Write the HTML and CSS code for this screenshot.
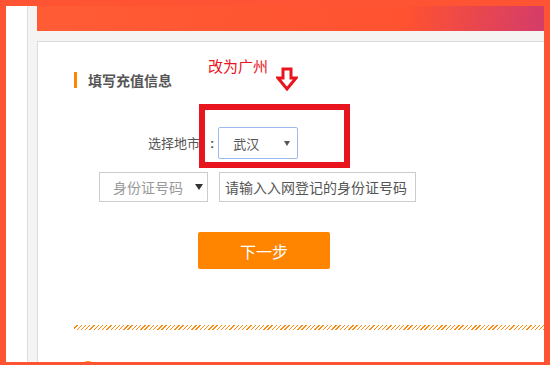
FILE: index.html
```html
<!DOCTYPE html>
<html lang="zh-CN">
<head>
  <meta charset="UTF-8" />
  <meta name="viewport" content="width=device-width, initial-scale=1.0" />
  <title>填写充值信息</title>
  <link rel="stylesheet" href="styles.css">
</head>
<body>
  <div class="frame">
    <div class="gutter"></div>
    <div class="side"></div>
    <div class="main">
      <div class="topbar"></div>
      <div class="strip"></div>
      <div class="panel">
        <h2 class="title">填写充值信息</h2>

        <div class="row row--city">
          <span class="label">选择地市</span><span class="colon">:</span>
          <div class="select select--city">
            <span>武汉</span>
            <i class="caret"></i>
          </div>
        </div>

        <div class="row row--id">
          <div class="select select--id">
            <span>身份证号码</span>
            <i class="caret caret--dark"></i>
          </div>
          <div class="input">请输入入网登记的身份证号码</div>
        </div>

        <div class="row row--btn">
          <button class="button">下一步</button>
        </div>

        <div class="hatch"></div>
        <div class="next"><i class="dot"></i></div>

        <!-- annotation drawn over the screenshot -->
        <div class="note">改为广州</div>
        <svg class="note-arrow" width="22" height="24" viewBox="0 0 22 24">
          <path d="M7 2 H15 V11 H20 L11 22 L2 11 H7 Z" fill="#fff" stroke="#e8141e" stroke-width="3" stroke-linejoin="miter"/>
        </svg>
        <div class="note-box"></div>
      </div>
    </div>
  </div>
</body>
</html>
```

FILE: styles.css
```css
:root {
  --frame: #ff5434;
  --red: #e8141e;
  --orange: #ff8400;
  --text: #555;
  --line: #dcdcdc;
  --gray-bg: #f5f4f2;
}
* {
  box-sizing: border-box;
  margin: 0;
  padding: 0;
}
body {
  font-family: "Noto Sans CJK SC", "Liberation Sans", sans-serif;
  color: var(--text);
  background: #fff;
}
.frame {
  width: 550px;
  height: 365px;
  border: 6px solid var(--frame);
  border-bottom-width: 3px;
  display: flex;
  overflow: hidden;
  background: #fff;
}
.gutter {
  width: 21px;
  flex: none;
}
.side {
  width: 10px;
  flex: none;
  background: var(--gray-bg);
  border-left: 1px solid var(--line);
}
.main {
  flex: 1;
  display: flex;
  flex-direction: column;
  min-width: 0;
}
.topbar {
  height: 25px;
  flex: none;
  background: linear-gradient(100deg, #ff5c35 0%, #ff5230 72%, #d43c6a 100%);
}
.strip {
  height: 10px;
  flex: none;
  background: var(--gray-bg);
}
.panel {
  flex: 1;
  position: relative;
  border-top: 1px solid var(--line);
  border-left: 1px solid var(--line);
  padding-top: 30px;
}
.title {
  margin-left: 36px;
  padding-left: 11px;
  border-left: 3px solid var(--orange);
  font-size: 14px;
  font-weight: bold;
  line-height: 16px;
  color: #555;
}
.row {
  display: flex;
  align-items: center;
}
.row--city {
  margin-top: 39px;
  padding-left: 110px;
}
.label {
  font-size: 13px;
  line-height: 32px;
  color: var(--text);
}
.colon {
  margin: 0 4px 0 10px;
  font-family: "Liberation Sans", sans-serif;
  font-size: 13px;
  font-weight: bold;
  color: var(--text);
}
.select {
  display: flex;
  align-items: center;
  justify-content: space-between;
  background: #fff;
}
.select--city {
  width: 80px;
  height: 32px;
  padding: 0 7px 0 14px;
  border: 1px solid #9bbbef;
  border-radius: 2px;
  font-size: 13px;
  color: #555;
}
.row--id {
  margin-top: 13px;
  padding-left: 61px;
}
.select--id {
  width: 109px;
  height: 30px;
  padding: 0 4px 0 13px;
  border: 1px solid #ccc;
  font-size: 14px;
  color: #999;
}
.input {
  width: 197px;
  height: 30px;
  margin-left: 11px;
  padding-left: 5px;
  border: 1px solid #ccc;
  font-size: 14px;
  line-height: 28px;
  color: #555;
  white-space: nowrap;
}
.caret {
  width: 0;
  height: 0;
  border-left: 3px solid transparent;
  border-right: 3px solid transparent;
  border-top: 5px solid #555;
}
.caret--dark {
  border-left-width: 4px;
  border-right-width: 4px;
  border-top: 6px solid #333;
}
.row--btn {
  margin-top: 30px;
  padding-left: 160px;
}
.button {
  width: 132px;
  height: 37px;
  border: none;
  border-radius: 2px;
  background: var(--orange);
  color: #fff;
  font-family: "Noto Sans CJK SC", "Liberation Sans", sans-serif;
  font-size: 16px;
}
.hatch {
  margin-top: 56px;
  margin-left: 36px;
  height: 5px;
  background: repeating-linear-gradient(135deg, #fff 0 2px, #ff8a10 2px 3px);
}
.next {
  margin-top: 31px;
  padding-left: 43px;
}
.dot {
  display: block;
  width: 14px;
  height: 14px;
  border-radius: 50%;
  background: #ff8a10;
}
.note {
  position: absolute;
  left: 170px;
  top: 16px;
  font-size: 15px;
  line-height: 16px;
  color: var(--red);
}
.note-arrow {
  position: absolute;
  left: 238px;
  top: 25px;
}
.note-box {
  position: absolute;
  left: 161px;
  top: 62px;
  width: 151px;
  height: 64px;
  border: 6px solid var(--red);
}
```
